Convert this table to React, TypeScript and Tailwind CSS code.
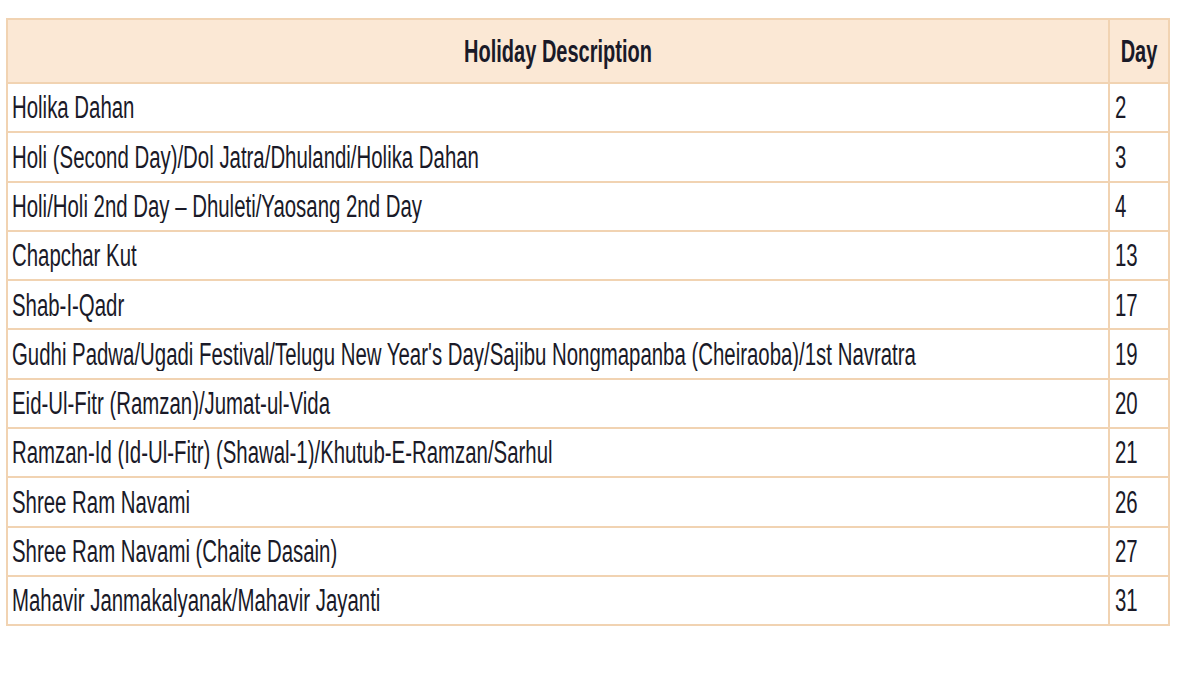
const holidays: { name: string; day: number }[] = [
  { name: "Holika Dahan", day: 2 },
  { name: "Holi (Second Day)/Dol Jatra/Dhulandi/Holika Dahan", day: 3 },
  { name: "Holi/Holi 2nd Day – Dhuleti/Yaosang 2nd Day", day: 4 },
  { name: "Chapchar Kut", day: 13 },
  { name: "Shab-I-Qadr", day: 17 },
  {
    name: "Gudhi Padwa/Ugadi Festival/Telugu New Year's Day/Sajibu Nongmapanba (Cheiraoba)/1st Navratra",
    day: 19,
  },
  { name: "Eid-Ul-Fitr (Ramzan)/Jumat-ul-Vida", day: 20 },
  { name: "Ramzan-Id (Id-Ul-Fitr) (Shawal-1)/Khutub-E-Ramzan/Sarhul", day: 21 },
  { name: "Shree Ram Navami", day: 26 },
  { name: "Shree Ram Navami (Chaite Dasain)", day: 27 },
  { name: "Mahavir Janmakalyanak/Mahavir Jayanti", day: 31 },
]

function Tall({ children }: { children: React.ReactNode }) {
  return <span className="inline-block scale-y-[1.55] origin-center whitespace-nowrap">{children}</span>
}

export default function App() {
  return (
    <div className="w-[1200px] h-[675px] bg-white pt-[18px] pl-[6px] font-['Liberation_Sans',Arial,sans-serif] text-[20.4px] text-[#1a1a28]">
      <table className="w-[1164px] border-collapse border-2 border-[#f1d3b2] table-fixed">
        <thead>
          <tr className="h-[64px] bg-[#fbe8d5]">
            <th className="border-2 border-[#f1d3b2] font-bold text-[20px] text-center px-1">
              <Tall>Holiday Description</Tall>
            </th>
            <th className="w-[60px] border-2 border-[#f1d3b2] font-bold text-[20px] text-center px-1">
              <Tall>Day</Tall>
            </th>
          </tr>
        </thead>
        <tbody>
          {holidays.map((h) => (
            <tr key={h.name} className="h-[49.3px]">
              <td className="border-2 border-[#f1d3b2] px-[4px] text-left">
                <Tall>{h.name}</Tall>
              </td>
              <td className="border-2 border-[#f1d3b2] px-[5px] text-left">
                <Tall>{h.day}</Tall>
              </td>
            </tr>
          ))}
        </tbody>
      </table>
    </div>
  )
}
